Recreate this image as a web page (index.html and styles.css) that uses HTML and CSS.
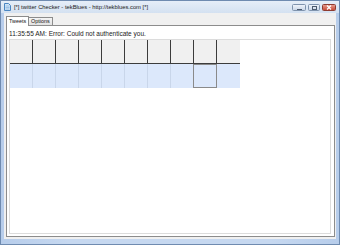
FILE: index.html
```html
<!DOCTYPE html>
<html>
<head>
<meta charset="utf-8">
<link rel="stylesheet" href="styles.css">
</head>
<body>
<div class="window">
  <div class="titlebar">
    <svg class="appicon" width="7" height="8" viewBox="0 0 7 8">
      <path d="M0.5 0.5h4l2 2v5h-6z" fill="#cfe4f7" stroke="#4a86c2" stroke-width="1"/>
      <path d="M1.5 3h4M1.5 4.5h4M1.5 6h4" stroke="#7aaad8" stroke-width="0.6"/>
    </svg>
    <span class="title">[*] twitter Checker - tekBlues - http://tekblues.com [*]</span>
    <div class="controls">
      <span class="btn min"><i class="minbar"></i></span>
      <span class="btn max"><i class="maxbox"></i></span>
      <span class="btn close">
        <svg width="6" height="5" viewBox="0 0 6 5"><path d="M1 0.5l4 4M5 0.5l-4 4" stroke="#fff" stroke-width="1.2"/></svg>
      </span>
    </div>
  </div>
  <div class="client">
    <div class="tabs">
      <span class="tab active">Tweets</span>
      <span class="tab">Options</span>
    </div>
    <div class="tabpage">
      <div class="status">11:35:55 AM: Error: Could not authenticate you.</div>
      <div class="gridbox">
        <div class="grid">
          <div class="hrow">
            <span class="hc"></span><span class="hc"></span><span class="hc"></span><span class="hc"></span><span class="hc"></span>
            <span class="hc"></span><span class="hc"></span><span class="hc"></span><span class="hc"></span><span class="hc last"></span>
          </div>
          <div class="drow">
            <span class="dc"></span><span class="dc"></span><span class="dc"></span><span class="dc"></span><span class="dc"></span>
            <span class="dc"></span><span class="dc"></span><span class="dc"></span><span class="dc sel"></span><span class="dc last"></span>
          </div>
        </div>
      </div>
    </div>
  </div>
</div>
</body>
</html>
```

FILE: styles.css
```css
* { box-sizing: border-box; }
html, body { margin: 0; padding: 0; }
body { width: 340px; height: 245px; overflow: hidden; font-family: "Liberation Sans", Arial, sans-serif; }
.window {
  width: 340px; height: 245px;
  background: linear-gradient(90deg, #b7cdeb, #c6d8f0 20%, #c6d8f0 80%, #b7cdeb);
  border: 1px solid #6f8bb0;
  display: flex; flex-direction: column;
  padding: 0 3px 5px 3px;
}
.titlebar {
  height: 12px; flex: none;
  display: flex; align-items: center;
  margin: 0 -3px;
  padding: 0 3px 0 3px;
  background: linear-gradient(#e6eef8, #d4e1f1);
}
.appicon { flex: none; margin-right: 3px; }
.title { font-size: 5.8px; color: #1a1a1a; white-space: nowrap; flex: 1; }
.controls { display: flex; gap: 2px; align-items: center; margin-top: 1px; }
.btn {
  height: 7px; border: 1px solid #7f93ad; border-radius: 1.5px;
  background: linear-gradient(#eef3fa, #cbd7e8);
  display: flex; align-items: center; justify-content: center;
}
.btn.min { width: 14px; }
.btn.max { width: 12px; }
.btn.close { width: 14px; border-color: #8e3b30; background: linear-gradient(#e69a8c, #c94b38); }
.minbar { display: block; width: 5px; height: 1px; background: #4d5b6e; margin-top: 3px; }
.maxbox { display: block; width: 5px; height: 4px; border: 1px solid #4d5b6e; border-top-width: 1.5px; }
.client {
  flex: 1; background: #f0f0f0;
  display: flex; flex-direction: column;
  padding: 3px 1px 2px 2px;
}
.tabs { display: flex; height: 9px; align-items: flex-end; position: relative; z-index: 1; flex: none; }
.tab {
  font-size: 5.4px; color: #111;
  border: 1px solid #8c8c8c; border-bottom: none;
  background: linear-gradient(#f4f4f4, #e2e2e2);
  height: 8px; padding: 0 2px; line-height: 7px;
}
.tab.active { background: #fff; height: 10px; line-height: 8px; margin-bottom: -1px; }
.tab + .tab { border-left: none; }
.tabpage {
  flex: 1; background: #fff;
  border: 1px solid #8c8c8c;
  display: flex; flex-direction: column;
  padding: 2px 3px 2px 2px;
}
.status { font-size: 6.5px; color: #222; height: 11px; line-height: 11px; padding-left: 0; white-space: nowrap; flex: none; }
.gridbox {
  flex: 1; border: 1px solid #dcdcdc;
  padding: 0;
}
.grid { display: flex; flex-direction: column; width: 230px; }
.hrow { display: flex; height: 24px; background: #f0f0f0; border-bottom: 1px solid #3c3c3c; }
.hc { width: 23px; height: 100%; border-right: 1px solid #3c3c3c; }
.hc.last { border-right: 1px solid #f0f0f0; }
.drow { display: flex; height: 24px; background: #dce8fb; }
.dc { width: 23px; height: 100%; border-right: 1px solid #c9d6ea; }
.dc.last { border-right: none; }
.dc.sel { border: 1px solid #8a8a8a; margin-left: -1px; width: 24px; }
```
